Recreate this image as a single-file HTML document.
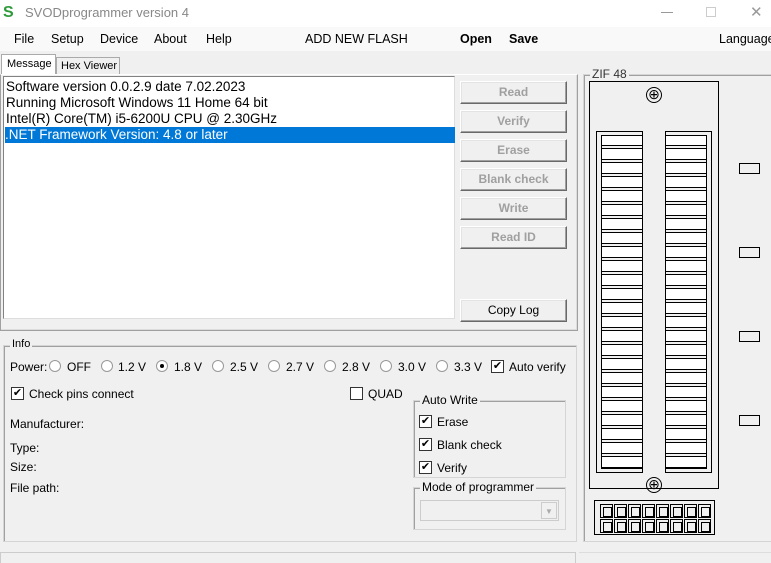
<!DOCTYPE html>
<html><head><meta charset="utf-8"><style>
*{box-sizing:border-box;margin:0;padding:0}
body{width:771px;height:563px;background:#f0f0f0;font-family:"Liberation Sans",sans-serif;font-size:12px;color:#000;position:relative;overflow:hidden}
.a{position:absolute}
.btn{position:absolute;left:460px;width:107px;height:23px;background:#f0f0f0;border:1px solid;border-color:#fff #696969 #696969 #fff;box-shadow:inset -1px -1px 0 #a0a0a0,inset 1px 1px 0 #e3e3e3;text-align:center;line-height:21px;color:#a0a0a0;font-weight:bold;font-size:12px}
.grp{position:absolute;border:1px solid #d5d5d5;box-shadow:inset 1px 1px 0 #a0a0a0}
.grp>.t{position:absolute;top:-8px;left:6px;background:#f0f0f0;padding:0 2px;font-size:12px}
.cb{position:absolute;width:13px;height:13px;border:1px solid #333;background:#fff;font-size:11px;line-height:11px;text-align:center}
.rb{position:absolute;width:12px;height:12px;border-radius:50%;border:1px solid #999;background:#fff}
.slat{position:absolute;border:1px solid #000;background:repeating-linear-gradient(#fff 0 9px,#000 9px 10px,#f0f0f0 10px 12px,#000 12px 13px,#fff 13px 14px)}
.pin{display:inline-block;width:13px;height:14px;border:1px solid #000;margin-right:1px;position:relative;vertical-align:top}
.pin:after{content:"";position:absolute;left:2px;top:2px;width:7px;height:8px;border:1px solid #000}
</style></head><body>
<div class="a" style="left:0;top:0;width:771px;height:27px;background:#fff"></div>
<div class="a" style="left:3px;top:4px;font-size:16px;font-weight:bold;color:#2e9a3a">S</div>
<div class="a" style="left:25px;top:5px;font-size:13px;color:#888">SVODprogrammer version 4</div>
<div class="a" style="left:661px;top:12px;width:12px;height:1px;background:#999"></div>
<div class="a" style="left:706px;top:7px;width:10px;height:10px;border:1px solid #ccc"></div>
<div class="a" style="left:750px;top:3px;font-size:15px;color:#999">✕</div>
<div class="a" style="left:0;top:27px;width:771px;height:24px;background:#f9f9f9"></div>
<div class="a" style="top:32px;left:14px;font-size:12.5px">File</div>
<div class="a" style="top:32px;left:51px;font-size:12.5px">Setup</div>
<div class="a" style="top:32px;left:100px;font-size:12.5px">Device</div>
<div class="a" style="top:32px;left:154px;font-size:12.5px">About</div>
<div class="a" style="top:32px;left:206px;font-size:12.5px">Help</div>
<div class="a" style="top:32px;left:305px;font-size:12.5px">ADD NEW FLASH</div>
<div class="a" style="top:32px;left:460px;font-size:12.5px;font-weight:bold">Open</div>
<div class="a" style="top:32px;left:509px;font-size:12.5px;font-weight:bold">Save</div>
<div class="a" style="top:32px;left:719px;font-size:12.5px">Language</div>
<div class="a" style="left:1px;top:54px;width:55px;height:21px;background:#fff;border:1px solid #aaa;border-bottom:none;font-size:11px;padding:3px 0 0 5px">Message</div>
<div class="a" style="left:56px;top:57px;width:64px;height:18px;border:1px solid #aaa;border-bottom:none;font-size:11px;padding:2px 0 0 4px">Hex Viewer</div>
<div class="a" style="left:0;top:74px;width:578px;height:257px;border:1px solid #a0a0a0;border-top-color:#fff;box-shadow:inset -1px -1px 0 #dcdcdc"></div>
<div class="a" style="left:3px;top:76px;width:452px;height:243px;background:#fff;border:1px solid #828282;border-right-color:#ddd;border-bottom-color:#ddd;font-size:13.5px;line-height:16px;padding:2px 0 0 2px">
<div>Software version 0.0.2.9 date 7.02.2023</div>
<div>Running Microsoft Windows 11 Home 64 bit</div>
<div>Intel(R) Core(TM) i5-6200U CPU @ 2.30GHz</div>
<div style="background:#0078d7;color:#fff;margin-left:-1px;width:450px">.NET Framework Version: 4.8 or later</div>
</div>
<div class="btn" style="top:81px">Read</div>
<div class="btn" style="top:110px">Verify</div>
<div class="btn" style="top:139px">Erase</div>
<div class="btn" style="top:168px">Blank check</div>
<div class="btn" style="top:197px">Write</div>
<div class="btn" style="top:226px">Read ID</div>
<div class="btn" style="top:299px;color:#000;font-weight:normal">Copy Log</div>
<div class="grp" style="left:3px;top:345px;width:574px;height:197px"><span class="t" style="font-size:11px">Info</span></div>
<div class="a" style="left:10px;top:360px">Power:</div>
<div class="rb" style="left:49px;top:360px"></div><div class="a" style="left:67px;top:360px">OFF</div>
<div class="rb" style="left:101px;top:360px"></div><div class="a" style="left:118px;top:360px">1.2 V</div>
<div class="rb" style="left:156px;top:360px"><div style="width:4px;height:4px;background:#000;border-radius:50%;margin:3px"></div></div><div class="a" style="left:174px;top:360px">1.8 V</div>
<div class="rb" style="left:212px;top:360px"></div><div class="a" style="left:230px;top:360px">2.5 V</div>
<div class="rb" style="left:268px;top:360px"></div><div class="a" style="left:286px;top:360px">2.7 V</div>
<div class="rb" style="left:324px;top:360px"></div><div class="a" style="left:342px;top:360px">2.8 V</div>
<div class="rb" style="left:380px;top:360px"></div><div class="a" style="left:398px;top:360px">3.0 V</div>
<div class="rb" style="left:436px;top:360px"></div><div class="a" style="left:454px;top:360px">3.3 V</div>
<div class="cb" style="left:491px;top:360px">✔</div><div class="a" style="left:509px;top:360px">Auto verify</div>
<div class="cb" style="left:11px;top:387px">✔</div><div class="a" style="left:29px;top:387px">Check pins connect</div>
<div class="cb" style="left:350px;top:387px"></div><div class="a" style="left:368px;top:387px">QUAD</div>
<div class="a" style="left:10px;top:417px">Manufacturer:</div>
<div class="a" style="left:10px;top:441px">Type:</div>
<div class="a" style="left:10px;top:460px">Size:</div>
<div class="a" style="left:10px;top:481px">File path:</div>
<div class="grp" style="left:413px;top:400px;width:153px;height:78px"><span class="t">Auto Write</span></div>
<div class="cb" style="left:419px;top:415px">✔</div><div class="a" style="left:437px;top:415px">Erase</div>
<div class="cb" style="left:419px;top:438px">✔</div><div class="a" style="left:437px;top:438px">Blank check</div>
<div class="cb" style="left:419px;top:461px">✔</div><div class="a" style="left:437px;top:461px">Verify</div>
<div class="grp" style="left:413px;top:487px;width:153px;height:43px"><span class="t">Mode of programmer</span></div>
<div class="a" style="left:420px;top:500px;width:139px;height:21px;border:1px solid #ccc;background:#f0f0f0"><div style="position:absolute;right:1px;top:1px;width:16px;height:17px;border:1px solid #ccc;font-size:8px;color:#aaa;text-align:center;line-height:17px">▼</div></div>
<div class="a" style="left:0;top:552px;width:576px;height:11px;border:1px solid #ccc;border-bottom:none"></div>
<div class="a" style="left:579px;top:552px;width:192px;height:11px;border-top:1px solid #ddd"></div>
<div class="grp" style="left:583px;top:74px;width:190px;height:468px"><span class="t" style="color:#333">ZIF 48</span></div>
<div class="a" style="left:589px;top:81px;width:130px;height:408px;border:1px solid #000"></div>
<div class="a" style="left:646px;top:87px;width:16px;height:16px;border:1px solid #000;border-radius:50%;font-size:14px;line-height:13px;text-align:center">⊕</div>
<div class="a" style="left:646px;top:477px;width:16px;height:16px;border:1px solid #000;border-radius:50%;font-size:14px;line-height:13px;text-align:center">⊕</div>
<div class="a" style="left:596px;top:131px;width:47px;height:342px;border:1px solid #000"></div>
<div class="slat" style="left:601px;top:135px;width:42px;height:334px"></div>
<div class="a" style="left:665px;top:131px;width:47px;height:342px;border:1px solid #000"></div>
<div class="slat" style="left:665px;top:135px;width:42px;height:334px"></div>
<div class="a" style="left:739px;top:163px;width:21px;height:11px;border:1px solid #000"></div>
<div class="a" style="left:739px;top:247px;width:21px;height:11px;border:1px solid #000"></div>
<div class="a" style="left:739px;top:331px;width:21px;height:11px;border:1px solid #000"></div>
<div class="a" style="left:739px;top:415px;width:21px;height:11px;border:1px solid #000"></div>
<div class="a" style="left:594px;top:500px;width:121px;height:35px;border:1px solid #000;padding:3px 0 0 5px;line-height:0;white-space:nowrap">
<div style="height:15px"><span class="pin"></span><span class="pin"></span><span class="pin"></span><span class="pin"></span><span class="pin"></span><span class="pin"></span><span class="pin"></span><span class="pin"></span></div>
<div style="height:15px"><span class="pin"></span><span class="pin"></span><span class="pin"></span><span class="pin"></span><span class="pin"></span><span class="pin"></span><span class="pin"></span><span class="pin"></span></div>
</div>
</body></html>
